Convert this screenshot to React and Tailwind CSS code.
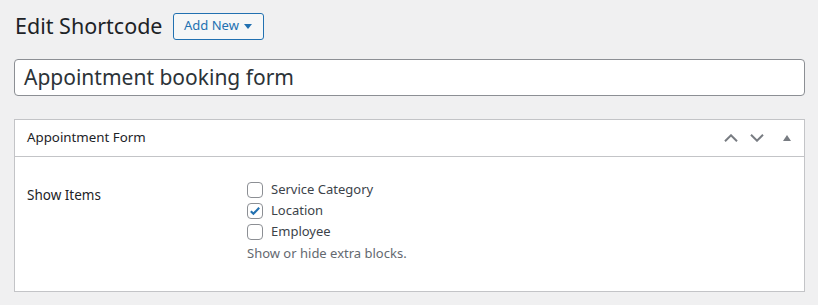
import React from "react";

const font = { fontFamily: '"Noto Sans", "Open Sans", sans-serif' };

function CheckRow({ label, checked }) {
  return (
    <label className="flex items-center h-[21px] text-[13px] text-[#3c434a]">
      <span className="w-4 h-4 border border-[#8c8f94] rounded-[4px] bg-white flex items-center justify-center mr-2">
        {checked && (
          <svg viewBox="0 0 16 16" className="w-4 h-4">
            <path d="M3.2 8.2l3 3L12.8 4.2" fill="none" stroke="#2271b1" strokeWidth="2.4" />
          </svg>
        )}
      </span>
      {label}
    </label>
  );
}

export default function App() {
  return (
    <div className="w-[818px] h-[305px] bg-[#f0f0f1] text-[#1d2327] overflow-hidden" style={font}>
      <div className="px-[14px] pt-[11px]">
        {/* Heading */}
        <div className="flex items-center h-[30px]">
          <h1 className="text-[21.5px] font-normal mr-[10px] ml-[1px] leading-[30px]">Edit Shortcode</h1>
          <button className="h-[27px] w-[91px] justify-center border border-[#2271b1] rounded-[3px] text-[#2271b1] text-[13px] flex items-center gap-[5px] bg-[#f6f7f7]">
            Add New
            <svg viewBox="0 0 10 6" className="w-[8px] h-[5px]">
              <path d="M0 0h10L5 6z" fill="#2271b1" />
            </svg>
          </button>
        </div>

        {/* Title input */}
        <div className="mt-[18px] h-[37px] border border-[#8c8f94] rounded-[4px] bg-white flex items-center px-[9px] pt-[1px] text-[21px] text-[#2c3338] w-[791px]">
          Appointment booking form
        </div>

        {/* Postbox */}
        <div className="mt-[23px] border border-[#c3c4c7] bg-white w-[791px]">
          <div className="h-[37px] border-b border-[#c3c4c7] flex items-center pl-[12px] pr-[13px]">
            <span className="text-[13.3px] flex-1">Appointment Form</span>
            <div className="flex items-center">
              <svg viewBox="0 0 14 8" className="w-[14px] h-[8px] mr-[12px]">
                <path d="M1 7.3l6-6 6 6" fill="none" stroke="#787c82" strokeWidth="2" />
              </svg>
              <svg viewBox="0 0 14 8" className="w-[14px] h-[8px] mr-[19px]">
                <path d="M1 0.7l6 6 6-6" fill="none" stroke="#787c82" strokeWidth="2" />
              </svg>
              <svg viewBox="0 0 8 6" className="w-[8px] h-[6px]">
                <path d="M4 0l4 6H0z" fill="#787c82" />
              </svg>
            </div>
          </div>
          <div className="flex pl-[12px] pt-[22px] pb-[27px]">
            <div className="w-[220px] text-[13.5px] pt-[6px]">Show Items</div>
            <div className="flex flex-col">
              <CheckRow label="Service Category" />
              <CheckRow label="Location" checked />
              <CheckRow label="Employee" />
              <p className="text-[13px] text-[#646970] mt-[2px]">Show or hide extra blocks.</p>
            </div>
          </div>
        </div>
      </div>
    </div>
  );
}
